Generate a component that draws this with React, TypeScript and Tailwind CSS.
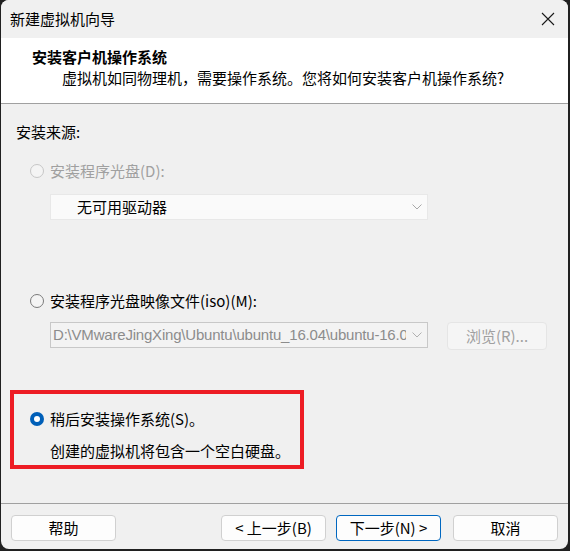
import React from 'react';

const font = { fontFamily: '"Microsoft YaHei UI", "Noto Sans CJK SC", "Noto Sans", sans-serif' };

type RadioProps = { checked?: boolean; disabled?: boolean };

const Radio: React.FC<RadioProps> = ({ checked, disabled }) => {
  if (checked) {
    return (
      <span className="flex h-[14px] w-[14px] shrink-0 items-center justify-center rounded-full bg-[#005fb8]">
        <span className="h-[6px] w-[6px] rounded-full bg-white" />
      </span>
    );
  }
  return (
    <span
      className={
        disabled
          ? 'h-[14px] w-[14px] shrink-0 rounded-full border border-[#c6c6c6] bg-[#f4f4f4]'
          : 'h-[14px] w-[14px] shrink-0 rounded-full border border-[#7a7a7a] bg-[#f4f4f4]'
      }
    />
  );
};

const Chevron: React.FC<{ color?: string }> = ({ color = '#9a9a9a' }) => (
  <svg width="10" height="6" viewBox="0 0 10 6" className="shrink-0">
    <path d="M0.5 0.5 L5 5 L9.5 0.5" fill="none" stroke={color} strokeWidth="1" />
  </svg>
);

const FooterButton: React.FC<{ label: string; primary?: boolean; className?: string }> = ({ label, primary, className }) => (
  <button
    className={
      'flex h-[26px] w-[105px] items-center justify-center rounded-[4px] bg-[#fdfdfd] text-[15px] leading-[20px] text-black ' +
      (primary ? 'border border-[#0067c0] ' : 'border border-[#d0d0d0] ') +
      (className || '')
    }
  >
    {label}
  </button>
);

export default function App() {
  return (
    <div className="h-[551px] w-[570px] bg-[#202020]" style={font}>
      <div className="ml-[1px] flex h-[549px] w-[567px] flex-col overflow-hidden rounded-[8px] bg-[#f0f0f0] text-black">
        {/* title bar */}
        <div className="flex h-[38px] shrink-0 items-center justify-between bg-[#f0f0f0] pl-[9px] pr-[12px]">
          <span className="text-[15px] leading-[20px]">新建虚拟机向导</span>
          <svg width="14" height="14" viewBox="0 0 14 14" className="mr-[1px]">
            <path d="M1 1 L13 13 M13 1 L1 13" stroke="#1a1a1a" strokeWidth="1.1" />
          </svg>
        </div>

        {/* header */}
        <div className="h-[65px] shrink-0 bg-white pt-[9px]">
          <div className="pl-[31px] text-[15px] font-bold leading-[20px]">安装客户机操作系统</div>
          <div className="mt-[1px] pl-[61px] text-[15px] leading-[20px]">
            虚拟机如同物理机，需要操作系统。您将如何安装客户机操作系统?
          </div>
        </div>
        <div className="h-px shrink-0 bg-[#a0a0a0]" />

        {/* body */}
        <div className="flex flex-1 flex-col">
          <div className="mt-[18px] pl-[15px] text-[15px] leading-[20px]">安装来源:</div>

          <div className="mt-[19px] flex h-[20px] items-center gap-[6px] pl-[29px]">
            <Radio disabled />
            <span className="text-[15px] leading-[20px] text-[#a0a0a0]">安装程序光盘(D):</span>
          </div>

          <div className="ml-[49px] mt-[13px] flex h-[26px] w-[378px] items-center justify-between border border-[#e8e8e8] bg-[#fafafa] pl-[26px] pr-[5px]">
            <span className="text-[15px] leading-[20px]">无可用驱动器</span>
            <Chevron color="#a8a8a8" />
          </div>

          <div className="mt-[71px] flex h-[20px] items-center gap-[6px] pl-[29px]">
            <Radio />
            <span className="text-[15px] leading-[20px]">安装程序光盘映像文件(iso)(M):</span>
          </div>

          <div className="mt-[11px] flex items-start">
            <div className="ml-[49px] flex h-[26px] w-[378px] items-center border border-[#c8c8c8] bg-[#f3f3f3] pl-[2px] pr-[5px]">
              <div className="min-w-0 flex-1 overflow-hidden">
                <span
                  className="block whitespace-nowrap text-[15px] leading-[20px] tracking-[-0.2px] text-[#8c8c8c]"
                  style={{ fontFamily: '"Liberation Sans", Arial, sans-serif' }}
                >
                  D:\VMwareJingXing\Ubuntu\ubuntu_16.04\ubuntu-16.04
                </span>
              </div>
              <span className="ml-[6px]">
                <Chevron color="#b0b0b0" />
              </span>
            </div>
            <button className="ml-[19px] flex h-[28px] w-[100px] items-center justify-center rounded-[4px] border border-[#e5e5e5] bg-[#f5f5f5] text-[15px] leading-[20px] text-[#a0a0a0]">
              浏览(R)...
            </button>
          </div>

          <div className="ml-[9px] mt-[40px] h-[79px] w-[294px] border-[4px] border-[#ed1c24] pt-[15px]">
            <div className="flex h-[20px] items-center gap-[6px] pl-[16px]">
              <Radio checked />
              <span className="text-[15px] leading-[20px]">稍后安装操作系统(S)。</span>
            </div>
            <div className="mt-[12px] pl-[36px] text-[15px] leading-[20px]">创建的虚拟机将包含一个空白硬盘。</div>
          </div>
        </div>

        {/* footer */}
        <div className="h-[46px] shrink-0 border-t border-[#a0a0a0] pt-[11px]">
          <div className="flex items-start pl-[10px]">
            <FooterButton label="帮助" />
            <FooterButton label="< 上一步(B)" className="ml-[105px]" />
            <FooterButton label="下一步(N) >" primary className="ml-[10px]" />
            <FooterButton label="取消" className="ml-[12px]" />
          </div>
        </div>
      </div>
    </div>
  );
}
